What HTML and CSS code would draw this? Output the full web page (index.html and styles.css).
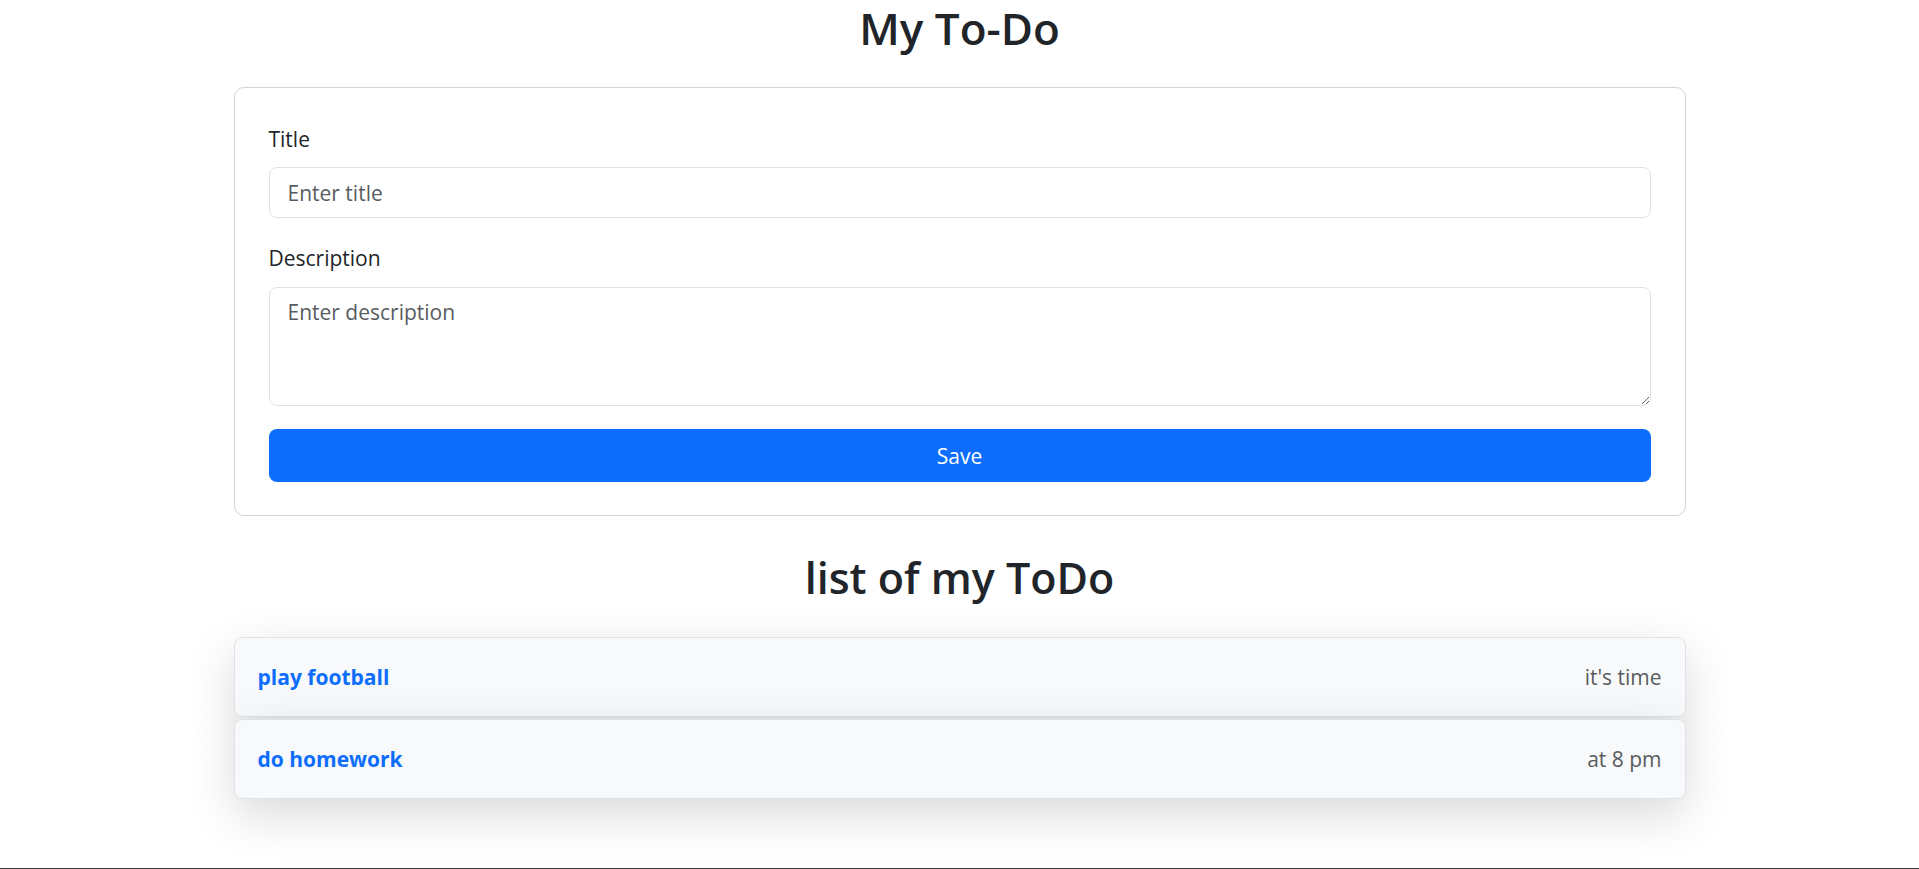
FILE: index.html
```html
<!DOCTYPE html>
<html lang="en">
<head>
<meta charset="utf-8">
<title>My To-Do</title>
<link rel="stylesheet" href="styles.css">
</head>
<body>
  <main class="container">
    <h1 class="page-title">My To-Do</h1>
    <form class="card">
      <label class="field-label" for="title">Title</label>
      <input class="field-input" id="title" type="text" placeholder="Enter title">
      <label class="field-label field-label-desc" for="desc">Description</label>
      <textarea class="field-textarea" id="desc" placeholder="Enter description"></textarea>
      <button class="save-btn" type="button">Save</button>
    </form>
    <h2 class="list-title">list of my ToDo</h2>
    <ul class="todo-list">
      <li class="todo-item">
        <span class="todo-name">play football</span>
        <span class="todo-desc">it's time</span>
      </li>
      <li class="todo-item">
        <span class="todo-name">do homework</span>
        <span class="todo-desc">at 8 pm</span>
      </li>
    </ul>
  </main>
  <footer class="bottom-line"></footer>
</body>
</html>
```

FILE: styles.css
```css
* { box-sizing: border-box; }

html, body {
  margin: 0;
  padding: 0;
}

body {
  height: 100vh;
  overflow: hidden;
  display: flex;
  flex-direction: column;
  background: #fff;
  color: #212529;
  font-family: "Open Sans", "Noto Sans", sans-serif;
  font-size: 21px;
  line-height: 30px;
}

.container {
  width: 1452px;
  margin: 0 auto;
}

.page-title {
  margin: 0 0 31px;
  font-size: 44px;
  line-height: 56px;
  font-weight: 600;
  text-align: center;
  color: #212529;
}

.card {
  display: flex;
  flex-direction: column;
  border: 1px solid #d3d4d5;
  border-radius: 10px;
  padding: 36px 34px 33px;
  background: #fff;
}

.field-label {
  display: block;
  line-height: 30px;
  margin-bottom: 13px;
  color: #212529;
}

.field-label-desc {
  margin-top: 25px;
  margin-bottom: 14px;
}

.field-input,
.field-textarea {
  display: block;
  width: 100%;
  border: 1px solid #dee2e6;
  border-radius: 8px;
  font-family: inherit;
  font-size: 21px;
  color: #212529;
  background: #fff;
  padding: 0 18px;
  outline: none;
}

.field-input {
  height: 51px;
}

.field-textarea {
  height: 119px;
  padding-top: 9px;
  line-height: 30px;
  resize: vertical;
}

.field-input::placeholder,
.field-textarea::placeholder {
  color: #595c5f;
  opacity: 1;
}

.save-btn {
  margin-top: 23px;
  height: 53px;
  width: 100%;
  border: none;
  border-radius: 8px;
  background: #0d6efd;
  color: #fff;
  font-family: inherit;
  font-size: 21px;
}

.list-title {
  margin: 34px 0 31px;
  font-size: 43px;
  line-height: 56px;
  font-weight: 600;
  text-align: center;
  color: #212529;
}

.todo-list {
  list-style: none;
  margin: 0;
  padding: 0;
  display: flex;
  flex-direction: column;
  gap: 2px;
}

.todo-item {
  display: flex;
  align-items: center;
  justify-content: space-between;
  height: 80px;
  padding: 0 23px;
  background: #f8f9fa;
  border: 1px solid #dee2e6;
  border-radius: 8px;
  box-shadow: 0 16px 48px rgba(0, 0, 0, 0.15);
}

.todo-name {
  color: #0d6efd;
  font-weight: 700;
}

.todo-desc {
  color: #595c5f;
}

.bottom-line {
  margin-top: auto;
  height: 1px;
  flex-shrink: 0;
  background: #3a3a3a;
}
```
